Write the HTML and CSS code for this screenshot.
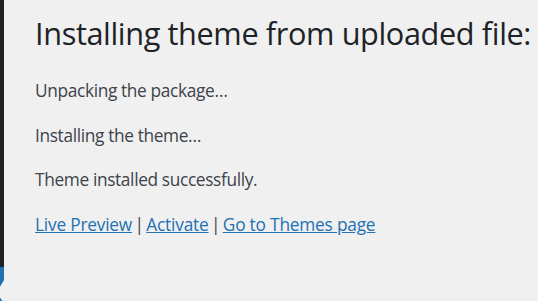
FILE: index.html
```html
<!DOCTYPE html>
<html lang="en">
<head>
<meta charset="utf-8">
<title>Install Themes</title>
<link rel="stylesheet" href="styles.css">
</head>
<body>
<div class="layout">
  <div class="sidebar">
    <div class="menu-dark"></div>
    <div class="menu-current">
      <svg class="notch" width="4" height="34" viewBox="0 0 4 34"><polygon points="4,13 -3,25 4,37" fill="#f0f0f1"/></svg>
    </div>
  </div>
  <main class="wrap">
    <h1 class="title">Installing theme from uploaded file:</h1>
    <p class="step">Unpacking the package…</p>
    <p class="step">Installing the theme…</p>
    <p class="step">Theme installed successfully.</p>
    <p class="step actions"><a href="#">Live Preview</a><span class="sep"> | </span><a href="#">Activate</a><span class="sep"> | </span><a href="#">Go to Themes page</a></p>
  </main>
</div>
</body>
</html>
```
FILE: styles.css
```css
html, body {
  margin: 0;
  padding: 0;
  height: 100%;
  background: #f0f0f1;
}
body {
  font-family: "Open Sans", "Noto Sans", sans-serif;
  overflow: hidden;
}
.layout {
  display: flex;
  height: 100%;
}
.sidebar {
  width: 4px;
  flex: none;
  display: flex;
  flex-direction: column;
}
.menu-dark {
  height: 267px;
  background: #1d2327;
}
.menu-current {
  flex: 1;
  background: #2271b1;
}
.notch {
  display: block;
}
.wrap {
  padding: 13px 0 0 31px;
  min-width: 0;
}
.title {
  margin: 0;
  font-size: 30.7px;
  line-height: 40px;
  font-weight: 400;
  letter-spacing: -0.38px;
  color: #1d2327;
  white-space: nowrap;
}
.step {
  margin: 25px 0 0;
  font-size: 17.3px;
  line-height: 26px;
  letter-spacing: -0.35px;
  color: #3c434a;
  white-space: nowrap;
}
.step + .step {
  margin-top: 18.5px;
}
.actions a {
  color: #2271b1;
  text-decoration: underline;
  letter-spacing: -0.2px;
}
.sep {
  word-spacing: -1.6px;
}
```
